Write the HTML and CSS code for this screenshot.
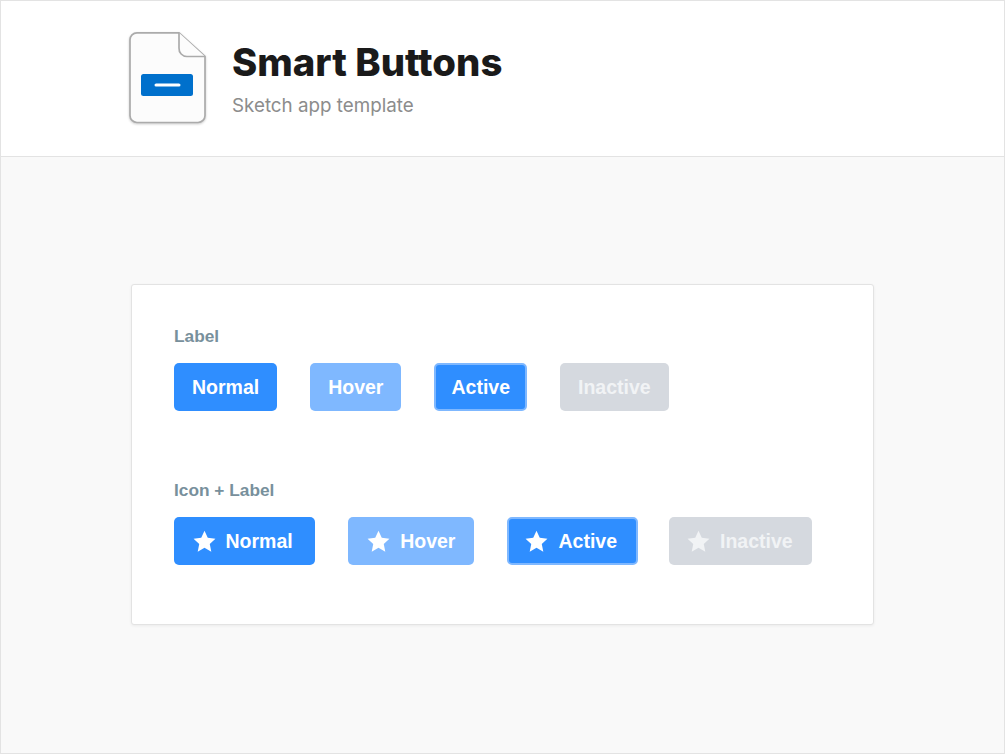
FILE: index.html
```html
<!DOCTYPE html>
<html lang="en">
<head>
    <meta charset="UTF-8">
    <meta name="viewport" content="width=device-width, initial-scale=1.0">
    <title>Smart Buttons</title>
    <link rel="stylesheet" href="styles.css">
</head>
<body>
    <svg class="sprite" width="0" height="0">
        <symbol id="star" viewBox="0 0 24 24">
            <path d="M12 .8l3.4 7.4 8 .9-5.900 5.500 1.600 8L12 18.600l-7.100 4 1.600-8L.6 9.100l8-.9z"/>
        </symbol>
    </svg>

    <header class="header">
        <svg class="file-icon" width="80" height="96" viewBox="0 0 80 96">
            <path class="file-body" d="M8 1.800h42L76 25.500V84.500a7 7 0 0 1-7 7H8a7 7 0 0 1-7-7V8.800a7 7 0 0 1 7-7z"/>
            <path class="file-fold" d="M50 1.800V17a8 8 0 0 0 8 8.500H76"/>
            <rect class="file-btn" x="12" y="43" width="52" height="22" rx="2.500"/>
            <rect class="file-dash" x="25.500" y="52.400" width="26" height="3.200" rx="1.600"/>
        </svg>
        <div class="header-text">
            <h1>Smart Buttons</h1>
            <p>Sketch app template</p>
        </div>
    </header>

    <main class="main">
        <section class="card">
            <div class="group">
                <h2>Label</h2>
                <div class="row">
                    <button class="btn normal">Normal</button>
                    <button class="btn hover">Hover</button>
                    <button class="btn active">Active</button>
                    <button class="btn inactive">Inactive</button>
                </div>
            </div>
            <div class="group">
                <h2>Icon + Label</h2>
                <div class="row">
                    <button class="btn with-icon normal"><svg class="star"><use href="#star"/></svg>Normal</button>
                    <button class="btn with-icon hover"><svg class="star"><use href="#star"/></svg>Hover</button>
                    <button class="btn with-icon active"><svg class="star"><use href="#star"/></svg>Active</button>
                    <button class="btn with-icon inactive"><svg class="star"><use href="#star"/></svg>Inactive</button>
                </div>
            </div>
        </section>
    </main>
</body>
</html>
```

FILE: styles.css
```css
* {
    box-sizing: border-box;
}
body {
    margin: 0;
    height: 754px;
    overflow: hidden;
    display: flex;
    flex-direction: column;
    background: #f9f9f9;
    border: 1px solid #e3e3e3;
    font-family: "Liberation Sans", Arial, sans-serif;
}
.sprite {
    position: absolute;
}
.header {
    height: 156px;
    flex: none;
    display: flex;
    align-items: flex-start;
    padding: 30px 0 0 128px;
    background: #fff;
    border-bottom: 1px solid #e3e3e3;
}
.file-icon {
    flex: none;
    filter: drop-shadow(0 1px 1px rgba(0, 0, 0, 0.2));
}
.file-body,
.file-fold {
    fill: #fcfcfc;
    stroke: #ababab;
    stroke-width: 1.7;
}
.file-btn {
    fill: #0070cc;
}
.file-dash {
    fill: #fff;
}
.header-text {
    margin-left: 23px;
    padding-top: 8px;
}
h1 {
    margin: 0;
    font-family: Inter, sans-serif;
    font-size: 38.300px;
    line-height: 46px;
    font-weight: 800;
    color: #1a1a1a;
}
.header-text p {
    margin: 9px 0 0;
    font-family: Inter, sans-serif;
    font-size: 18.800px;
    line-height: 24px;
    color: #8c8c8c;
}
.main {
    flex: 1;
    padding: 127px 0 0 130px;
}
.card {
    width: 743px;
    height: 341px;
    padding: 41px 42px 0;
    background: #fff;
    border: 1px solid #e3e3e3;
    border-radius: 3px;
    box-shadow: 0 1px 3px rgba(0, 0, 0, 0.06);
}
.group + .group {
    margin-top: 69px;
}
h2 {
    margin: 0 0 17px;
    font-size: 17.300px;
    line-height: 20px;
    font-weight: 700;
    color: #78909c;
}
.row {
    display: flex;
    gap: 33px;
}
.btn {
    height: 48px;
    padding: 0 18px;
    display: flex;
    align-items: center;
    border: 0;
    border-radius: 5px;
    font-family: "Liberation Sans", Arial, sans-serif;
    font-size: 19.500px;
    font-weight: 700;
    color: #fff;
}
.with-icon {
    gap: 10px;
}
.star {
    width: 23px;
    height: 23px;
    fill: #fff;
}
.normal {
    background: #2f8eff;
}
.hover {
    background: #7fb8ff;
}
.active {
    padding: 0 15px;
    background: #2f8eff;
    border: 2px solid #7fb8ff;
}
.inactive {
    background: #d5d9df;
    color: #f1f3f5;
}
.inactive .star {
    fill: #f1f3f5;
}
/* icon buttons are not evenly padded in the template */
.with-icon.normal {
    padding: 0 22px 0 18.500px;
}
.with-icon.hover {
    padding: 0 18.500px 0 19.500px;
}
.with-icon.active {
    padding: 0 19px 0 16.500px;
}
.with-icon.inactive {
    margin-left: -2.500px;
    padding: 0 19.500px 0 18.500px;
}
```
